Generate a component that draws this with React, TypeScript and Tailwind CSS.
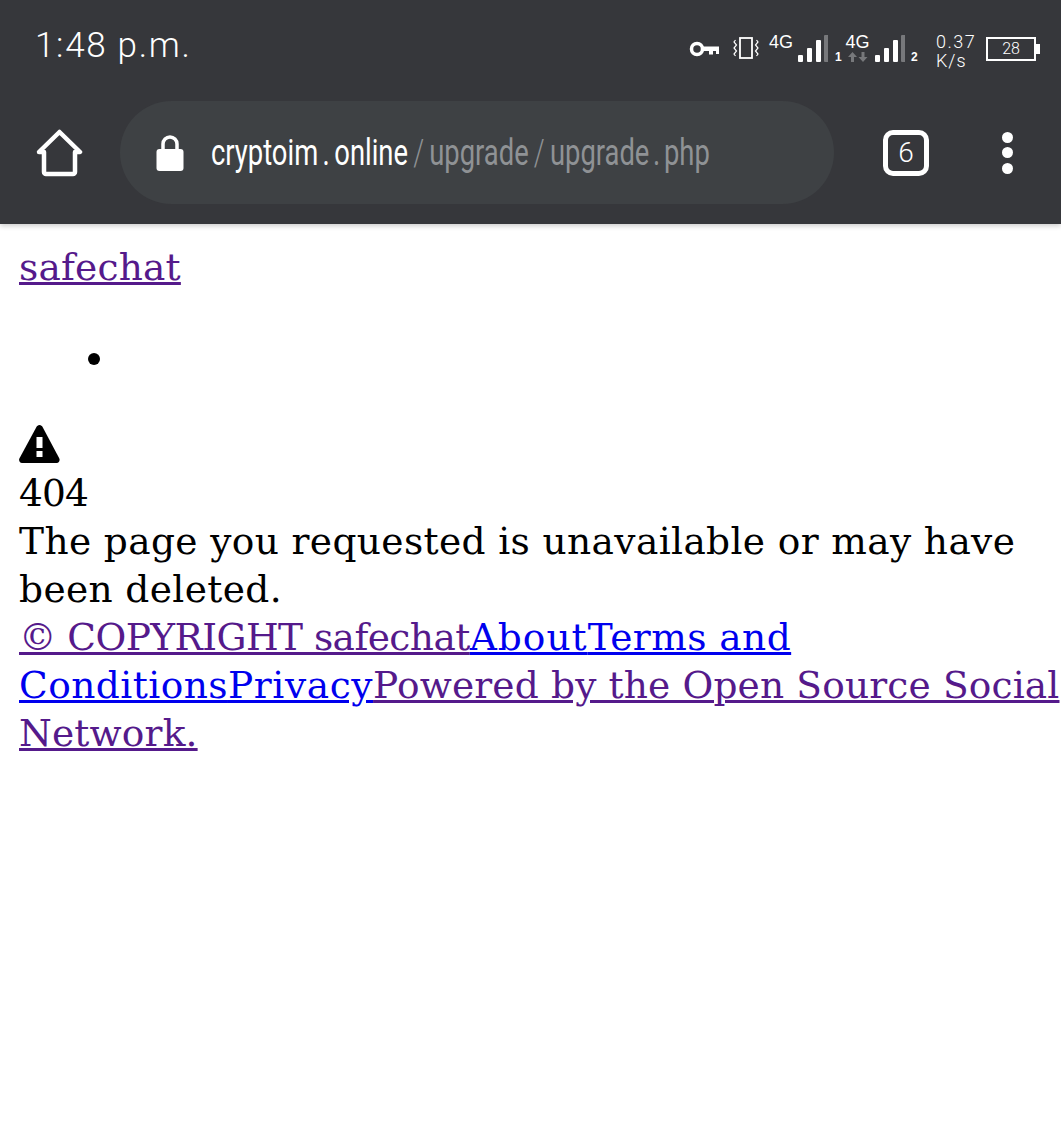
import React from 'react';

const Bars = () => (
  <svg className="w-[30px] h-[27px] shrink-0" viewBox="0 0 30 27">
    <rect x="0" y="20" width="5" height="7" rx="1" fill="#fff" />
    <rect x="9" y="13" width="5" height="14" rx="1" fill="#fff" />
    <rect x="18" y="5" width="5" height="22" rx="1" fill="#fff" />
    <rect x="26" y="0" width="4.500" height="27" rx="1" fill="#77787b" />
  </svg>
);

const StatusIcons = () => (
  <div className="flex items-start h-[36px] text-white font-['Liberation_Sans',sans-serif]">
    {/* key */}
    <svg className="w-[30px] h-[16px] mt-[8px] shrink-0" viewBox="0 0 30 16" fill="none">
      <circle cx="8" cy="8" r="5.500" stroke="#fff" strokeWidth="3.500" />
      <path d="M13 5.500h17v7.500h-3v-3h-3v3.500h-4v-3.500h-7z" fill="#fff" />
    </svg>
    {/* vibrate */}
    <svg className="ml-[14px] w-[27px] h-[22px] mt-[4px] shrink-0" viewBox="0 0 27 22" fill="none" stroke="#fff">
      <rect x="7" y="1" width="12" height="20" strokeWidth="1.800" />
      <path d="M2.500 3l-1.500 2 2.500 3-2.500 3 2.500 3-2.500 3 1.500 2M23.500 3l1.500 2-2.500 3 2.500 3-2.500 3 2.500 3-1.500 2" strokeWidth="1.200" />
    </svg>
    <span className="ml-[9px] w-[23px] text-[18px] leading-[18px]">4G</span>
    <div className="ml-[6px] mt-[2px]"><Bars /></div>
    <span className="ml-[7px] w-[4px] mt-[17px] text-[12px] leading-[14px] font-bold">1</span>
    <div className="ml-[7px] w-[23px] flex flex-col items-center">
      <span className="text-[18px] leading-[18px]">4G</span>
      <svg className="w-[20px] h-[10px] mt-[1px]" viewBox="0 0 20 10" fill="#77787b">
        <path d="M4.500 0l4.500 5H6v5H3V5H0zM15 10l-4.500-5h3V0h3v5h3z" />
      </svg>
    </div>
    <div className="ml-[6px] mt-[2px]"><Bars /></div>
    <span className="ml-[6px] w-[6px] mt-[17px] text-[12px] leading-[14px] font-bold">2</span>
    <div className="ml-[19px] w-[40px] font-['Roboto',sans-serif] font-light text-[18px] leading-[19px] -mt-[1px]">
      <div className="tracking-[1.500px] whitespace-nowrap">0.37</div>
      <div className="tracking-[1px]">K/s</div>
    </div>
    <div className="ml-[10px] mt-[4px] flex items-center">
      <div className="w-[50px] h-[24px] border-2 border-white text-[16px] leading-[20px] text-center font-['Roboto',sans-serif] font-light">28</div>
      <div className="w-[4px] h-[10px] bg-white" />
    </div>
  </div>
);

const App: React.FC = () => {
  return (
    <div className="min-h-[1124px] bg-white font-['DejaVu_Serif',serif]">
      <header className="h-[224px] bg-[#36373b] shadow-[0_2px_5px_rgba(0,0,0,0.2)]">
        <div className="h-[101px] flex items-start justify-between pl-[35px] pr-[21px]">
          <span className="mt-[25px] text-[35px] leading-[42px] text-white font-['Roboto',sans-serif] font-light tracking-[1.700px]">1:48 p.m.</span>
          <div className="mt-[33px]"><StatusIcons /></div>
        </div>
        <div className="flex items-center pl-[36px]">
          <svg className="w-[48px] h-[48px]" viewBox="0 0 48 48" fill="none" stroke="#fff" strokeWidth="4.500" strokeLinecap="round" strokeLinejoin="round">
            <path d="M3 23L23.500 3 44 23h-5v20a2 2 0 0 1-2 2H10a2 2 0 0 1-2-2V23z" />
          </svg>
          <div className="ml-[36px] w-[714px] h-[103px] rounded-full bg-[#3e4144] flex items-center pl-[36px]">
            <svg className="w-[28px] h-[36px] shrink-0" viewBox="0 0 28 36" fill="none">
              <path d="M7 15V9a7 7 0 0 1 14 0v6" stroke="#fff" strokeWidth="3.500" />
              <rect x="0.500" y="14" width="27" height="22" rx="3" fill="#fff" />
            </svg>
            <span className="ml-[27px] text-[37px] leading-[40px] font-['Roboto',sans-serif] whitespace-nowrap text-white scale-x-[0.74] origin-left">
              cryptoim<span className="mx-[6px]">.</span>online
              <span className="text-[#8f9295]">
                <span className="mx-[7px] font-light">/</span>upgrade<span className="mx-[7px] font-light">/</span>upgrade<span className="mx-[5px]">.</span>php
              </span>
            </span>
          </div>
          <div className="ml-[49px] w-[46px] h-[46px] rounded-[10px] border-[5px] border-white flex items-center justify-center text-white text-[28px] leading-none font-['Roboto',sans-serif] font-light">6</div>
          <div className="ml-[73px] flex flex-col gap-[4.500px]">
            <span className="w-[11px] h-[11px] rounded-full bg-white" />
            <span className="w-[11px] h-[11px] rounded-full bg-white" />
            <span className="w-[11px] h-[11px] rounded-full bg-white" />
          </div>
        </div>
      </header>

      <main className="pt-[19px] pl-[19px] text-[37.500px] tracking-[0.200px] leading-[48px] text-black">
        <a className="text-[#551a8b] underline block">safechat</a>
        <ul className="mt-[42px] mb-10 list-disc pl-[99px]">
          <li>&nbsp;</li>
        </ul>
        <svg className="w-[41px] h-[48px] block" viewBox="0 0 41 48">
          <path d="M20.500 4c1.500 0 2.500 1 3.200 2.200l16.500 31c1 2 0 4.800-2.500 4.800H3c-2.500 0-3.500-2.800-2.500-4.800l16.800-31C18 5 19 4 20.500 4z" fill="#000" />
          <rect x="17.500" y="16" width="6" height="11" fill="#fff" />
          <rect x="17.500" y="30" width="6" height="6" fill="#fff" />
        </svg>
        <div className="tracking-[-0.800px]">404</div>
        <div className="tracking-[0.380px]">The page you requested is unavailable or may have been deleted.</div>
        <div>
          <a className="text-[#551a8b] underline tracking-[-0.550px]">© COPYRIGHT safechat</a>
          <a className="text-[#0000ee] underline tracking-[1px]">About</a>
          <a className="text-[#0000ee] underline tracking-[0.450px]">Terms and Conditions</a>
          <a className="text-[#0000ee] underline tracking-[0.600px]">Privacy</a>
          <a className="text-[#551a8b] underline tracking-[0.160px]">Powered by the Open Source Social Network.</a>
        </div>
      </main>
    </div>
  );
};

export default App;
